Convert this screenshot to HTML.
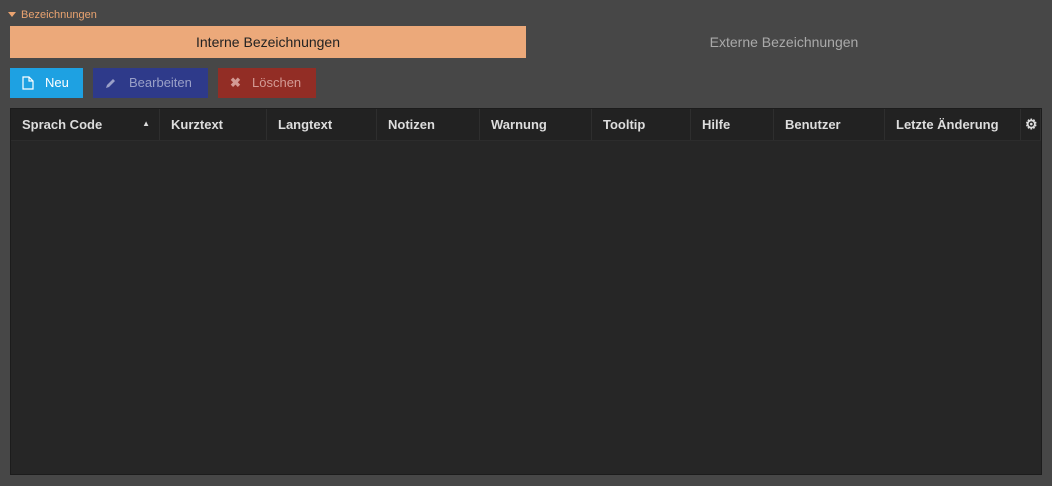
<!DOCTYPE html><html><head><style>
body{margin:0;width:1052px;height:486px;background:#474747;font-family:"Liberation Sans",sans-serif;position:relative;overflow:hidden}
.a{position:absolute}
.th{position:absolute;top:0;height:31px;line-height:31px;font-size:13px;font-weight:bold;color:#ddd;border-right:1px solid #2e2e2e;box-sizing:border-box;padding-left:11px}
</style></head><body>
<div class="a" style="left:8px;top:9px;font-size:11px;color:#eaa370"><span style="display:inline-block;width:0;height:0;border-left:4px solid transparent;border-right:4px solid transparent;border-top:5px solid #eaa370;margin-right:5px;vertical-align:1px"></span>Bezeichnungen</div>
<div class="a" style="left:10px;top:26px;width:516px;height:32px;background:#eca97a;color:#222;font-size:14px;text-align:center;line-height:32px">Interne Bezeichnungen</div>
<div class="a" style="left:526px;top:26px;width:516px;height:32px;color:#aaa;font-size:14px;text-align:center;line-height:32px">Externe Bezeichnungen</div>
<div class="a" style="left:10px;top:68px;width:73px;height:30px;background:#1ea1e2;color:#fff;font-size:13px;line-height:30px"><svg class="a" style="left:12px;top:8px" width="12" height="14" viewBox="0 0 12 14"><path d="M1 1h6l4 4v8H1z M7 1v4h4" fill="none" stroke="#fff" stroke-width="1.2"/></svg><span style="position:absolute;left:35px">Neu</span></div>
<div class="a" style="left:93px;top:68px;width:115px;height:30px;background:#2e3a8a;color:#9aa0c8;font-size:13px;line-height:30px"><svg class="a" style="left:12px;top:9px" width="12" height="12" viewBox="0 0 12 12"><path d="M1 11l1-3 6-6 2 2-6 6z" fill="#9aa0c8"/></svg><span style="position:absolute;left:36px">Bearbeiten</span></div>
<div class="a" style="left:218px;top:68px;width:98px;height:30px;background:#922d25;color:#d39a94;font-size:13px;line-height:30px"><span style="position:absolute;left:12px;font-weight:bold">✖</span><span style="position:absolute;left:34px">Löschen</span></div>
<div class="a" style="left:10px;top:108px;width:1032px;height:367px;background:#262626;border:1px solid #1c1c1c;box-sizing:border-box">
<div class="a" style="left:0;top:0;width:1030px;height:31px;background:#222;border-bottom:1px solid #2c2c2c"></div>
<div class="th" style="left:0;width:149px">Sprach Code<span style="position:absolute;right:9px;top:-1px;font-size:8px">▲</span></div>
<div class="th" style="left:149px;width:107px">Kurztext</div>
<div class="th" style="left:256px;width:110px">Langtext</div>
<div class="th" style="left:366px;width:103px">Notizen</div>
<div class="th" style="left:469px;width:112px">Warnung</div>
<div class="th" style="left:581px;width:99px">Tooltip</div>
<div class="th" style="left:680px;width:83px">Hilfe</div>
<div class="th" style="left:763px;width:111px">Benutzer</div>
<div class="th" style="left:874px;width:136px">Letzte Änderung</div>
<div class="th" style="left:1010px;width:20px;padding-left:4px;font-size:14px">⚙</div>
</div>
</body></html>
